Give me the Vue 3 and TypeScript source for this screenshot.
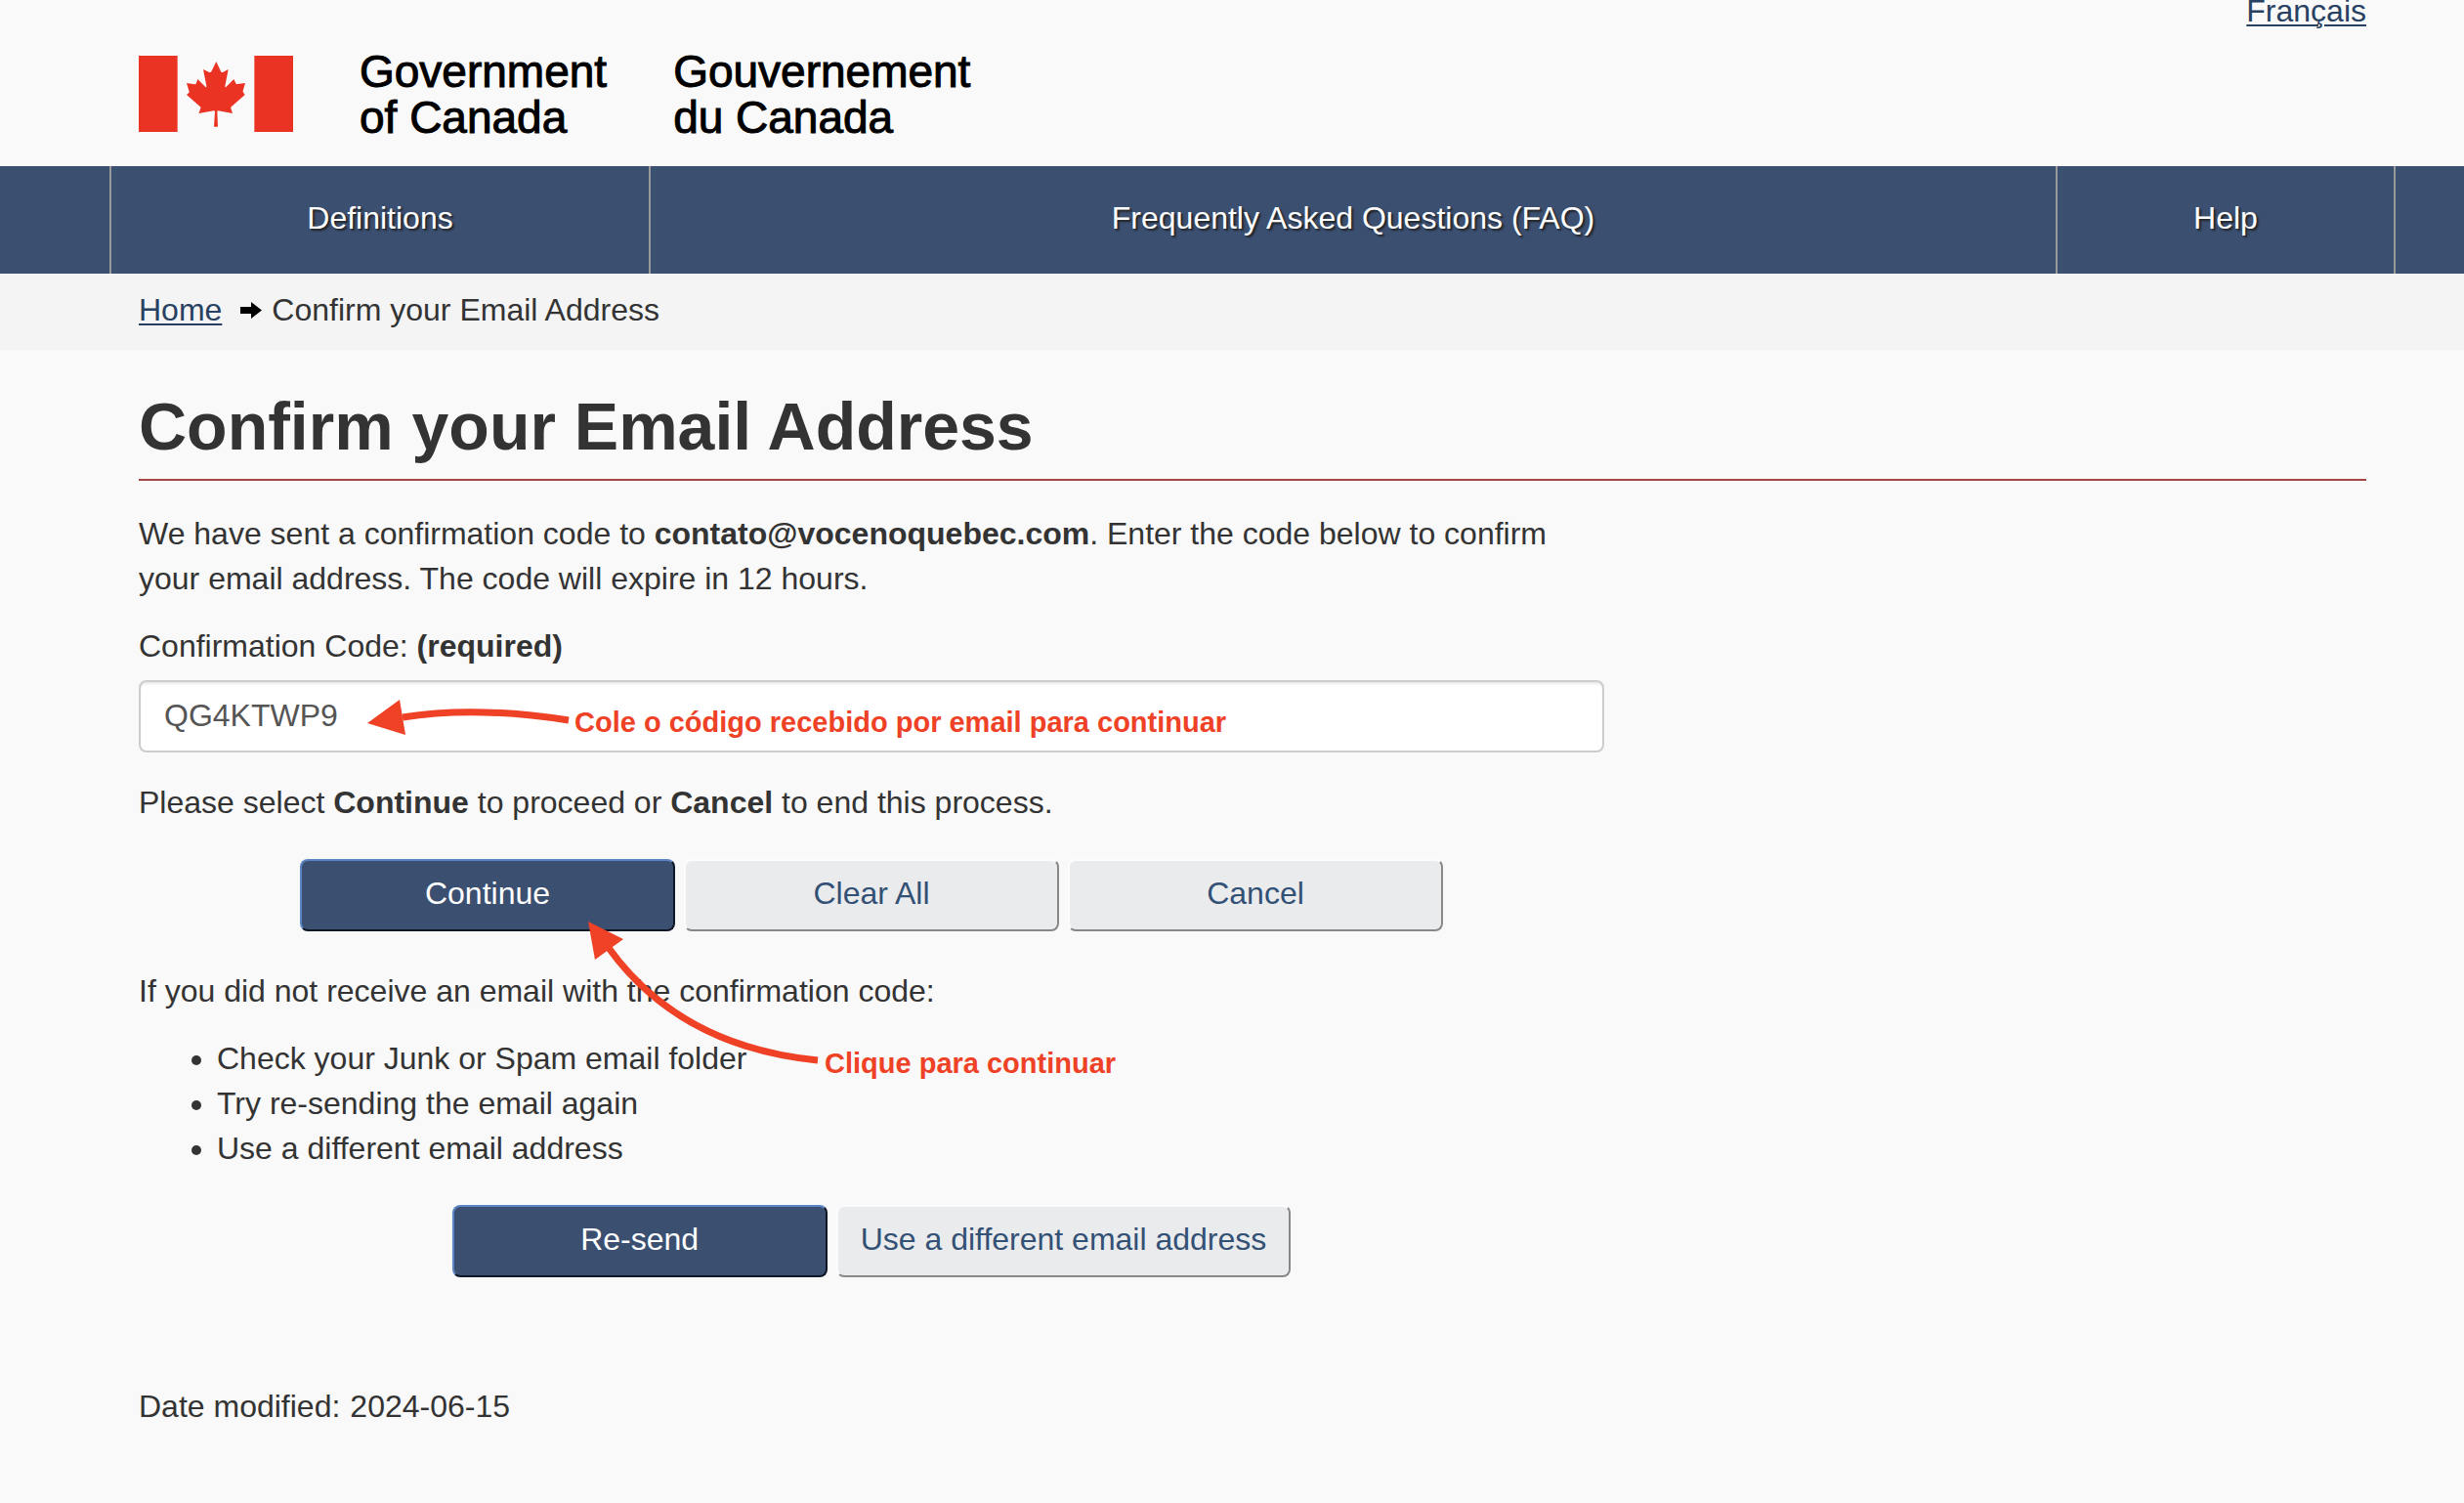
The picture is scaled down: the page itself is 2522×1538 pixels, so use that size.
<script setup lang="ts">
import { ref } from 'vue'

interface NavItem {
  label: string
  cls: string
}

const navItems: NavItem[] = [
  { label: 'Definitions', cls: 'nav-definitions' },
  { label: 'Frequently Asked Questions (FAQ)', cls: 'nav-faq' },
  { label: 'Help', cls: 'nav-help' },
]

const tips: string[] = [
  'Check your Junk or Spam email folder',
  'Try re-sending the email again',
  'Use a different email address',
]

const code = ref('QG4KTWP9')

function clearAll(): void {
  code.value = ''
}
</script>

<template>
  <div class="page">
    <header class="banner container">
      <div class="brand">
        <svg class="flag" viewBox="126 171 474 234" role="img" aria-label="Flag of Canada">
          <rect x="126" y="171" width="119" height="234" />
          <rect x="481" y="171" width="119" height="234" />
          <path
            d="M364 189 379 221Q381 223 384 222L401 213 391 265Q391 269 394 267L418 243 425 257Q426 259 429 258L453 255 446 279Q445 282 448 285L452 291 410 328Q408 330 409 333L414 348 370 340Q367 340 367 343L369 389H357L360 343Q360 340 357 340L310 348 316 333Q317 330 315 328L273 291 279 286Q282 284 281 281L273 255 298 259Q301 259 302 257L307 243 331 267Q335 269 334 264L324 213 343 222Q347 223 349 220Z"
          />
        </svg>
        <span class="wordmark">Government<br />of Canada</span>
        <span class="wordmark">Gouvernement<br />du Canada</span>
      </div>
      <a class="language" href="#" lang="fr">Français</a>
    </header>

    <nav class="menu" aria-label="Site menu">
      <ul class="menu-list">
        <li v-for="item in navItems" :key="item.label" :class="item.cls">
          <a href="#">{{ item.label }}</a>
        </li>
      </ul>
    </nav>

    <nav class="crumbs" aria-label="Breadcrumb">
      <ol class="container crumb-list">
        <li><a href="#">Home</a></li>
        <li>
          <svg class="crumb-arrow" viewBox="0 0 22 17" aria-hidden="true">
            <path d="M0 5H11V0L22 8.500 11 17V12H0Z" />
          </svg>
          Confirm your Email Address
        </li>
      </ol>
    </nav>

    <main class="container">
      <h1>Confirm your Email Address</h1>

      <div class="row">
        <div class="column">
          <p>
            We have sent a confirmation code to <strong>contato@vocenoquebec.com</strong>. Enter the
            code below to confirm your email address. The code will expire in 12 hours.
          </p>

          <form @submit.prevent>
            <label for="code">Confirmation Code: <strong>(required)</strong></label>
            <div class="field">
              <input id="code" v-model="code" type="text" autocomplete="off" />
              <div class="note note-code">
                <svg class="arrow-code" viewBox="0 0 208 40" aria-hidden="true">
                  <path class="shaft" d="M36 20Q110 8 206 23" />
                  <path class="head" d="M0 26 33 2 39 38Z" />
                </svg>
                <span>Cole o código recebido por email para continuar</span>
              </div>
            </div>

            <p>
              Please select <strong>Continue</strong> to proceed or <strong>Cancel</strong> to end
              this process.
            </p>

            <div class="actions">
              <button type="submit" class="btn primary">Continue</button>
              <button type="button" class="btn" @click="clearAll">Clear All</button>
              <button type="button" class="btn">Cancel</button>
              <div class="note note-continue">
                <svg class="arrow-continue" viewBox="0 0 238 150" aria-hidden="true">
                  <path class="shaft" d="M21 27Q94 128 235 142" />
                  <path class="head" d="M0 0 36 18 7 39Z" />
                </svg>
                <span>Clique para continuar</span>
              </div>
            </div>
          </form>

          <p>If you did not receive an email with the confirmation code:</p>
          <ul class="tips">
            <li v-for="tip in tips" :key="tip">{{ tip }}</li>
          </ul>

          <div class="actions">
            <button type="button" class="btn primary">Re-send</button>
            <button type="button" class="btn">Use a different email address</button>
          </div>
        </div>
      </div>

      <dl class="modified">
        <dt>Date modified:</dt>
        <dd><time datetime="2024-06-15">2024-06-15</time></dd>
      </dl>
    </main>
  </div>
</template>

<style>
body {
  margin: 0;
  background: #f9f9f9;
}
</style>

<style scoped>
.page {
  min-height: 100vh;
  overflow: hidden;
  background: #f9f9f9;
  color: #333;
  font-family: 'Helvetica Neue', 'Liberation Sans', Arial, sans-serif;
  font-size: 32px;
  line-height: 46px;
}

.page * {
  box-sizing: border-box;
}

.container {
  padding: 0 100px 0 142px;
}

a {
  color: #284162;
  text-underline-offset: 3px;
  text-decoration-thickness: 2px;
}

/* Banner */
.banner {
  display: flex;
  justify-content: space-between;
  align-items: flex-start;
  height: 170px;
}

.brand {
  display: flex;
  gap: 68px;
  padding-top: 50px;
}

.flag {
  width: 158px;
  height: 78px;
  margin-top: 7px;
  fill: #eb3323;
}

.wordmark {
  color: #000;
  font-size: 46px;
  line-height: 47px;
  -webkit-text-stroke: 1px #000;
}

.language {
  margin-top: -12px;
}

/* Menu */
.menu {
  padding: 0 70px 0 112px;
  background: #3b4f71;
}

.menu-list {
  display: flex;
  margin: 0;
  padding: 0;
  list-style: none;
  border-left: 2px solid #999;
}

.menu-list li {
  border-right: 2px solid #999;
}

.nav-definitions {
  flex: 550 1 0;
}

.nav-faq {
  flex: 1438 1 0;
}

.nav-help {
  flex: 344 1 0;
}

.menu-list a {
  display: block;
  padding: 30px 0 34px;
  color: #fff;
  text-align: center;
  text-decoration: none;
  text-shadow: 2px 2px 2px #222;
}

/* Breadcrumb */
.crumbs {
  background: #f4f4f4;
}

.crumb-list {
  display: flex;
  gap: 19px;
  margin: 0;
  padding-top: 14px;
  padding-bottom: 18px;
  list-style: none;
}

.crumb-list li {
  display: flex;
  align-items: center;
  gap: 10px;
}

.crumb-arrow {
  width: 22px;
  height: 17px;
  fill: #000;
}

/* Content */
h1 {
  margin: 0 0 31px;
  padding: 38px 0 14px;
  border-bottom: 2px solid #a94446;
  font-size: 68px;
  line-height: 80px;
}

.row {
  display: flex;
  margin: 0 -30px;
}

.column {
  width: calc(100% * 2 / 3);
  padding: 0 30px;
}

p {
  margin: 0 0 23px;
}

label {
  display: block;
  margin-bottom: 12px;
}

.field {
  position: relative;
  margin-bottom: 28px;
}

input {
  display: block;
  width: 100%;
  height: 74px;
  padding: 0 24px 2px;
  border: 2px solid #ccc;
  border-radius: 8px;
  background: #fff;
  box-shadow: inset 0 2px 2px rgba(0, 0, 0, 0.075);
  color: #555;
  font: inherit;
}

.actions {
  position: relative;
  display: flex;
  justify-content: center;
  gap: 9px;
  margin: 35px 0 38px;
}

.btn {
  min-width: 384px;
  height: 74px;
  padding: 0 23px 4px;
  border: 2px solid;
  border-color: #fcfcfe #888 #888 #fcfcfe;
  border-radius: 8px;
  background: #eaebed;
  color: #335075;
  font: inherit;
}

.primary {
  border-color: #5b85c2 #0f1626 #0f1626 #5b85c2;
  background: #3b4f71;
  color: #fff;
}

.tips {
  margin: 0 0 35px;
  padding-left: 80px;
}

.modified {
  display: flex;
  gap: 10px;
  margin: 71px 0 0;
}

.modified dd {
  margin: 0;
}

/* Annotations */
.note {
  position: absolute;
  display: flex;
  color: #ee4125;
  font-size: 29px;
  font-weight: 700;
  line-height: 32px;
  white-space: nowrap;
  pointer-events: none;
}

.note-code {
  top: 18px;
  left: 234px;
  gap: 4px;
}

.note-code span {
  padding-top: 9px;
}

.arrow-code {
  width: 208px;
  height: 40px;
}

.note-continue {
  top: 64px;
  left: 460px;
  align-items: flex-end;
  gap: 4px;
}

.note-continue span {
  margin-bottom: -11px;
}

.arrow-continue {
  width: 238px;
  height: 150px;
}

.shaft {
  fill: none;
  stroke: #ee4125;
  stroke-width: 7px;
}

.head {
  fill: #ee4125;
}
</style>
